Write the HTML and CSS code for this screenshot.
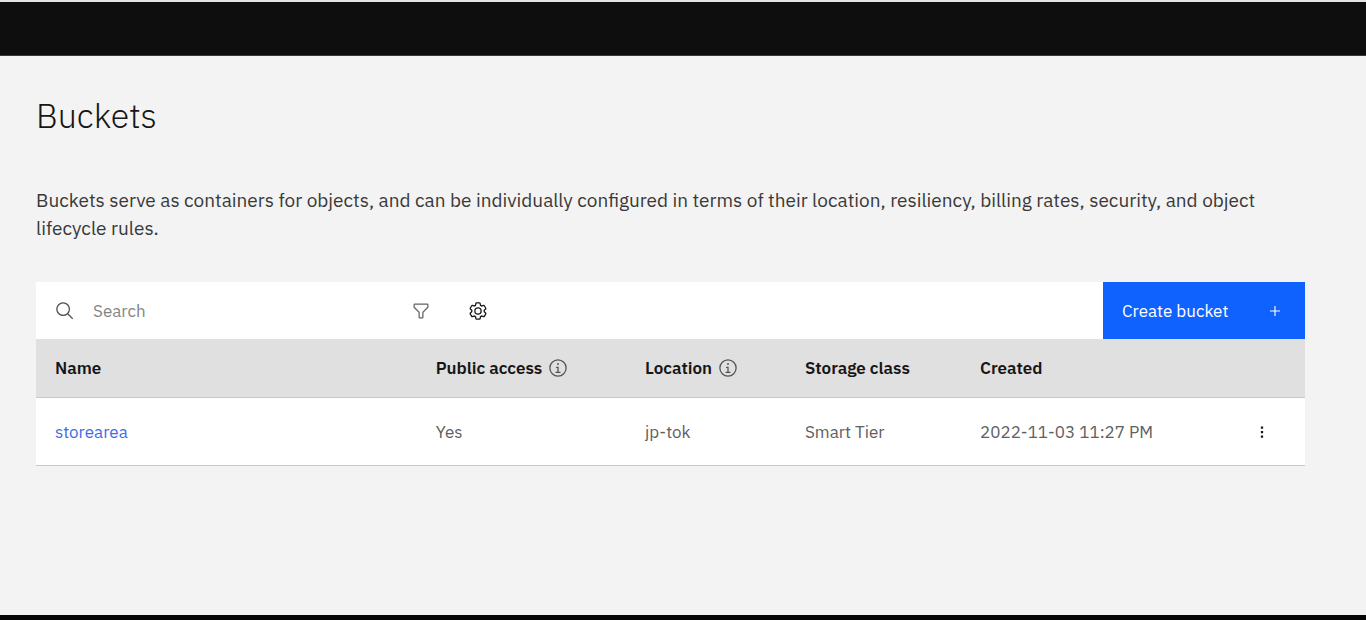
FILE: index.html
```html
<!DOCTYPE html>
<html lang="en">
<head>
<meta charset="utf-8">
<meta name="viewport" content="width=device-width, initial-scale=1">
<title>Buckets</title>
<link rel="stylesheet" href="styles.css">
</head>
<body>
<svg class="sprite" aria-hidden="true">
  <symbol id="info" viewBox="0 0 32 32"><path d="M17 22V14H13v2h2v6H12v2h8V22ZM16 8a1.5 1.5 0 1 0 1.5 1.5A1.5 1.5 0 0 0 16 8Z"/><path d="M16 30A14 14 0 1 1 30 16 14 14 0 0 1 16 30ZM16 4A12 12 0 1 0 28 16 12 12 0 0 0 16 4Z"/></symbol>
</svg>
<header class="topbar"></header>
<main class="page">
  <h1 class="title">Buckets</h1>
  <p class="intro">Buckets serve as containers for objects, and can be individually configured in terms of their location, resiliency, billing rates, security, and object lifecycle rules.</p>
  <section class="panel">
    <div class="toolbar">
      <label class="search">
        <svg class="icon" viewBox="0 0 32 32" aria-hidden="true"><path d="M29 27.586l-7.552-7.552a11.018 11.018 0 1 0-1.414 1.414L27.586 29ZM4 13a9 9 0 1 1 9 9A9.01 9.01 0 0 1 4 13Z"/></svg>
        <input class="search-input" type="search" placeholder="Search" aria-label="Search">
      </label>
      <button class="tool muted" type="button" aria-label="Filter">
        <svg class="icon" viewBox="0 0 32 32"><path d="M18 28H14a2 2 0 0 1-2-2V18.41L4.59 11A2 2 0 0 1 4 9.59V6A2 2 0 0 1 6 4H26a2 2 0 0 1 2 2V9.59A2 2 0 0 1 27.41 11L20 18.41V26A2 2 0 0 1 18 28ZM6 6V9.59l8 8V26h4V17.59l8-8V6Z"/></svg>
      </button>
      <button class="tool" type="button" aria-label="Settings">
        <svg class="icon" viewBox="0 0 32 32"><path d="M27 16.76c0-.25 0-.5 0-.76s0-.51 0-.77l1.92-1.68A2 2 0 0 0 29.3 11L26.94 7a2 2 0 0 0-1.73-1 2 2 0 0 0-.64.1l-2.43.82a11.35 11.35 0 0 0-1.31-.75l-.51-2.52a2 2 0 0 0-2-1.61H13.64a2 2 0 0 0-2 1.61l-.51 2.52a11.48 11.48 0 0 0-1.32.75L7.43 6.06A2 2 0 0 0 6.79 6 2 2 0 0 0 5.06 7L2.7 11a2 2 0 0 0 .41 2.51L5 15.24c0 .25 0 .5 0 .76s0 .51 0 .77L3.11 18.45A2 2 0 0 0 2.7 21L5.06 25a2 2 0 0 0 1.73 1 2 2 0 0 0 .64-.1l2.43-.82a11.35 11.35 0 0 0 1.31.75l.51 2.52a2 2 0 0 0 2 1.61h4.72a2 2 0 0 0 2-1.61l.51-2.52a11.48 11.48 0 0 0 1.32-.75l2.42.82a2 2 0 0 0 .64.1 2 2 0 0 0 1.73-1L29.3 21a2 2 0 0 0-.41-2.51ZM25.21 24l-3.43-1.16a8.86 8.86 0 0 1-2.71 1.57L18.36 28H13.64l-.71-3.55a9.36 9.36 0 0 1-2.7-1.57L6.79 24 4.43 20l2.72-2.4a8.9 8.9 0 0 1 0-3.13L4.43 12 6.79 8l3.43 1.16a8.86 8.86 0 0 1 2.71-1.57L13.64 4h4.72l.71 3.55a9.36 9.36 0 0 1 2.7 1.57L25.21 8 27.57 12l-2.72 2.4a8.9 8.9 0 0 1 0 3.13L27.57 20Z"/><path d="M16 22a6 6 0 1 1 6-6A5.94 5.94 0 0 1 16 22Zm0-10a3.91 3.91 0 0 0-4 4 3.91 3.91 0 0 0 4 4 3.91 3.91 0 0 0 4-4A3.91 3.91 0 0 0 16 12Z"/></svg>
      </button>
      <button class="create" type="button">Create bucket
        <svg class="icon small" viewBox="0 0 32 32" aria-hidden="true"><path d="M17 15V7H15v8H7v2h8v8h2V17h8V15Z"/></svg>
      </button>
    </div>
    <table class="table">
      <colgroup><col class="c-name"><col class="c-access"><col class="c-location"><col class="c-class"><col class="c-created"><col></colgroup>
      <thead>
        <tr>
          <th scope="col">Name</th>
          <th scope="col"><span class="head">Public access <svg class="icon info"><use href="#info"/></svg></span></th>
          <th scope="col"><span class="head">Location <svg class="icon info"><use href="#info"/></svg></span></th>
          <th scope="col">Storage class</th>
          <th scope="col">Created</th>
          <th></th>
        </tr>
      </thead>
      <tbody>
        <tr>
          <td><a class="link" href="#">storearea</a></td>
          <td>Yes</td>
          <td>jp-tok</td>
          <td>Smart Tier</td>
          <td>2022-11-03 11:27 PM</td>
          <td><button class="menu" type="button" aria-label="Options">
            <svg class="icon small" viewBox="0 0 32 32"><path d="M14 6h4v4h-4zM14 14h4v4h-4zM14 22h4v4h-4z"/></svg>
          </button></td>
        </tr>
      </tbody>
    </table>
  </section>
</main>
<footer class="bottombar"></footer>
</body>
</html>
```
FILE: styles.css
```css
* { box-sizing: border-box; }
body {
  margin: 0;
  min-height: 100vh;
  display: flex;
  flex-direction: column;
  background: #f3f3f3;
  color: #161616;
  font-family: "IBM Plex Sans", "Noto Sans", sans-serif;
  font-size: 17px;
}
button, input { font: inherit; color: inherit; border: 0; background: none; padding: 0; margin: 0; }
.sprite { display: none; }
.icon { width: 20px; height: 20px; fill: currentColor; flex: none; display: block; }
.small { width: 18px; height: 18px; }
.topbar { height: 56px; background: #0e0e0e; border-top: 2px solid #e4e4e4; border-bottom: 1px solid #393939; }
.bottombar { height: 5px; background: #060606; }
.page { flex: 1; padding: 35px 61px 36px 36px; }
.title { margin: 0; font-size: 34px; line-height: 48px; font-weight: 300; }
.intro { margin: 47px 0 0; font-size: 19px; line-height: 28px; color: #393939; }
.panel { margin-top: 40px; }
.toolbar { display: flex; height: 57px; background: #fff; }
.search { display: flex; align-items: center; gap: 18px; flex: 0 0 28%; padding-left: 19px; color: #525252; }
.search-input { flex: 1; min-width: 0; outline: 0; }
.search-input::placeholder { color: #858585; opacity: 1; }
.tool { width: 57px; padding-left: 3px; display: grid; place-items: center; }
.muted { color: #636363; }
.create {
  margin-left: auto;
  width: 202px;
  padding: 0 21px 0 19px;
  display: flex;
  align-items: center;
  justify-content: space-between;
  background: #0f62fe;
  color: #fff;
}
.table { width: 100%; table-layout: fixed; border-collapse: separate; border-spacing: 0; }
.c-name { width: 30%; }
.c-access { width: 16.5%; }
.c-location { width: 12.6%; }
.c-class { width: 13.8%; }
.c-created { width: 21.5%; }
.table th, .table td { padding: 0 0 0 19px; text-align: left; white-space: nowrap; border-bottom: 1px solid #c9c9c9; }
.table th { height: 59px; background: #e0e0e0; font-weight: 600; }
.table td { height: 68px; background: #fff; color: #606060; }
.head { display: flex; align-items: center; gap: 6px; }
.info { color: #525252; }
.link { color: #416be6; text-decoration: none; }
.menu { display: block; color: #161616; }
```
